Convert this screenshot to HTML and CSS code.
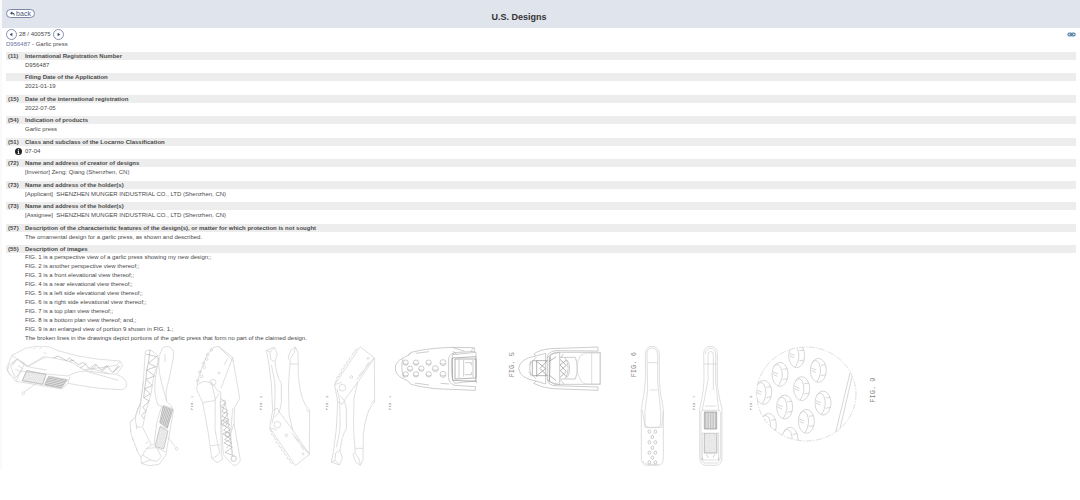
FILE: index.html
```html
<!DOCTYPE html>
<html lang="en">
<head>
<meta charset="utf-8">
<title>U.S. Designs</title>
<link rel="stylesheet" href="styles.css">
</head>
<body>
<header class="topbar">
  <button class="back" type="button"><svg class="back-icon" viewBox="0 0 16 16" aria-hidden="true"><path d="M7 1v4c5 0 8 3 8 9h-3c0-4-2-5-5-5v4L0 7z"/></svg>back</button>
  <h1 class="title">U.S. Designs</h1>
</header>
<main class="page">
  <div class="toolbar">
    <nav class="pager" aria-label="Records">
      <button class="round" type="button" aria-label="Previous"><svg viewBox="0 0 10 10"><path d="M6 3v4L3 5z"/></svg></button>
      <span>28 / 400575</span>
      <button class="round" type="button" aria-label="Next"><svg viewBox="0 0 10 10"><path d="M4 3v4L7 5z"/></svg></button>
    </nav>
    <a class="permalink" href="#" aria-label="Permanent link"><svg viewBox="0 0 24 14"><g fill="none" stroke="#5b87aa" stroke-width="3.500"><rect x="2" y="3" width="11" height="8" rx="4"/><rect x="11" y="3" width="11" height="8" rx="4"/><path d="M7 7h10"/></g></svg></a>
  </div>
  <p class="record"><a href="#">D956487</a> - Garlic press</p>
  <dl class="fields">
    <div class="field"><dt><span class="code">(11)</span>International Registration Number</dt><dd>D956487</dd></div>
    <div class="field"><dt><span class="code"></span>Filing Date of the Application</dt><dd>2021-01-19</dd></div>
    <div class="field"><dt><span class="code">(15)</span>Date of the international registration</dt><dd>2022-07-05</dd></div>
    <div class="field"><dt><span class="code">(54)</span>Indication of products</dt><dd>Garlic press</dd></div>
    <div class="field"><dt><span class="code">(51)</span>Class and subclass of the Locarno Classification</dt><dd class="with-info"><svg class="info" viewBox="0 0 12 12" role="img" aria-label="Information"><circle cx="6" cy="6" r="6" fill="#222"/><path d="M6 2v2M6 5v5M4.500 5.500H6M4.500 9.500h3" stroke="#fff" stroke-width="1.500"/></svg>07-04</dd></div>
    <div class="field"><dt><span class="code">(72)</span>Name and address of creator of designs</dt><dd>[Inventor] Zeng; Qiang (Shenzhen, CN)</dd></div>
    <div class="field"><dt><span class="code">(73)</span>Name and address of the holder(s)</dt><dd>[Applicant]&nbsp; SHENZHEN MUNGER INDUSTRIAL CO., LTD (Shenzhen, CN)</dd></div>
    <div class="field"><dt><span class="code">(73)</span>Name and address of the holder(s)</dt><dd>[Assignee]&nbsp; SHENZHEN MUNGER INDUSTRIAL CO., LTD (Shenzhen, CN)</dd></div>
    <div class="field"><dt><span class="code">(57)</span>Description of the characteristic features of the design(s), or matter for which protection is not sought</dt><dd>The ornamental design for a garlic press, as shown and described.</dd></div>
    <div class="field images"><dt><span class="code">(55)</span>Description of images</dt>
      <dd>FIG. 1 is a perspective view of a garlic press showing my new design;;</dd>
      <dd>FIG. 2 is another perspective view thereof;;</dd>
      <dd>FIG. 3 is a front elevational view thereof;;</dd>
      <dd>FIG. 4 is a rear elevational view thereof;;</dd>
      <dd>FIG. 5 is a left side elevational view thereof;;</dd>
      <dd>FIG. 6 is a right side elevational view thereof;;</dd>
      <dd>FIG. 7 is a top plan view thereof;;</dd>
      <dd>FIG. 8 is a bottom plan view thereof; and,;</dd>
      <dd>FIG. 9 is an enlarged view of portion 9 shown in FIG. 1.;</dd>
      <dd>The broken lines in the drawings depict portions of the garlic press that form no part of the claimed design.</dd>
    </div>
  </dl>
  <div class="figures">
    <svg class="figure" width="122" height="124" viewBox="18 18 366 372">
      <defs>
        <pattern id="mesh" width="7" height="7" patternUnits="userSpaceOnUse" patternTransform="rotate(12)"><circle cx="3.500" cy="3.500" r="2.500"/></pattern>
        <pattern id="slats" width="8" height="5" patternUnits="userSpaceOnUse" patternTransform="rotate(12)"><path d="M0 2h8" stroke="#777" stroke-width="2"/></pattern>
        <pattern id="slats-up" width="8" height="5" patternUnits="userSpaceOnUse" patternTransform="rotate(108)"><path d="M0 2h8" stroke="#777" stroke-width="2"/></pattern>
        <pattern id="bars" width="5" height="8" patternUnits="userSpaceOnUse"><path d="M2 0v8" stroke="#888" stroke-width="2"/></pattern>
      </defs>
      <path d="M20 84 36 46 76 25Q122 14 152 22L174 32Q230 50 290 57L360 63 368 77 350 103Q280 98 254 90L208 64 160 54 130 50 82 80 66 68 52 57 28 74 22 92 48 125 62 126 185 147 204 130Q270 142 310 146L365 149Q381 144 380 131 376 112 350 104M36 46 80 78M52 57 32 81 46 115 63 92 82 96 204 108M64 68 92 82 140 90M52 57 74 70 63 92 48 125M82 80 135 52M204 108Q245 86 270 97L355 121M204 130 210 110M250 90 350 76 360 64M20 84 30 106"/>
      <path class="dark" d="M160 54 174 48 200 62 208 54 235 74 250 67 270 86 286 72 303 90 320 77 337 97 361 78M208 64 223 60M240 85 260 70M274 91 290 74M305 94 325 77M340 98 355 76"/>
      <path d="M80 92 138 103 128 133 67 122ZM146 108 204 119 184 145 134 135Z"/>
      <path class="dark" d="M80 92 138 103 128 133 67 122Z" fill="url(#mesh)"/>
      <path class="dark" d="M146 110 200 120 184 143 134 134Z" fill="url(#slats)"/>
      <path d="M105 133 72 156"/><circle cx="70" cy="160" r="4"/>
      <path d="M34 76 49 60M46 88 67 96M54 77 70 87M100 27l6-2M118 25l6-2M131 38l8 3M260 83l70 18"/>
    </svg>
    <svg class="figure" width="67" height="124" viewBox="384 18 201 372">
      <path d="M436 34 450 29 472 45 475 65 462 105 453 160 435 225 428 262 454 315 440 325 423 352 424 370 448 377 477 373 497 347 520 214 514 198 500 184Q494 160 507 118L520 55 521 34Q509 12 488 23L477 50 466 116Q460 160 474 195L485 198 470 250 462 314 454 315M436 34 430 125 421 190 404 234 390 248 393 282 415 340 424 352M421 190Q399 230 410 260L425 262M430 125 418 224M478 54Q472 75 485 130L500 184M489 195 520 207 501 266 480 257M440 325 470 323 484 350 470 364 452 360 427 344M470 323 496 336M424 370 452 360M390 248 400 236"/>
      <path class="dark" d="M438 42 470 50 445 70 468 80 440 90 464 108 438 118 457 137 434 146 451 162 431 173 448 183 428 202 438 212 424 227 433 237M450 29 445 70 440 90 438 118 434 146 431 173"/>
      <path class="dark" d="M489 198 517 209 502 264 479 248Z" fill="url(#slats-up)"/>
      <path class="dark" d="M480 260 504 273 491 327 465 319Z" fill="url(#mesh)"/>
      <path d="M503 291 526 320M391 268l2 7M397 294l2 7M408 325l3 6M436 310l8-4M410 256v12M495 42v24"/><circle cx="530" cy="326" r="4"/>
      <text class="label small" transform="translate(580 210) rotate(-90)">FIG. 1</text>
    </svg>
    <svg class="figure" width="69" height="124" viewBox="30 18 207 372">
      <path d="M37 128 48 90 65 47 83 23 100 19 143 52 145 65 164 176 149 202 147 250 166 360Q160 377 144 376L115 344 106 185 108 157 99 153 80 128 57 124 37 134ZM37 134 35 149 53 188 70 280 80 355 96 368 113 358 109 342 106 185M53 188 88 182 103 160M80 128 91 178 90 270 104 338 95 348 82 354M78 317 104 314M143 52 108 145M143 205 137 280 142 345M106 185 120 180 132 260 142 345M100 19 145 63M117 75l12-20M147 250 137 280"/>
      <circle cx="84" cy="127" r="9"/><circle cx="102" cy="99" r="3"/>
      <path class="dark" d="M107 174 121 188 108 200 128 211 110 228 132 239 112 253 136 269 114 282 138 297 117 309 142 322 120 337 148 348M121 188 111 216 129 220 113 243 134 254 116 270 137 283 119 298 140 309 123 325"/>
      <circle class="dark" cx="118" cy="248" r="9"/><circle class="dark" cx="128" cy="284" r="7"/><circle class="dark" cx="146" cy="356" r="8"/>
      <circle cx="79" cy="30" r="4"/><circle cx="68" cy="44" r="4"/><circle cx="65" cy="57" r="4"/><circle cx="56" cy="70" r="4"/><circle cx="58" cy="82" r="4"/><circle cx="45" cy="96" r="4"/><circle cx="50" cy="109" r="4"/><circle cx="38" cy="122" r="4"/>
      <text class="label small" transform="translate(232 210) rotate(-90)">FIG. 2</text>
    </svg>
    <svg class="figure" width="65" height="124" viewBox="12 18 195 372">
      <g id="lever">
        <path d="M19 31 43 22 52 42 45 65Q50 110 64 130L64 190 58 216 98 270 148 343 106 377 29 263 32 246 38 212 34 130 25 60ZM19 31 30 36 43 22M30 36 32 58 45 66M34 75Q48 130 45 165L44 215 36 250M38 212 52 204 58 216M92 31 106 21 114 38 115 112Q123 190 149 211L148 343M92 31 84 54 91 63Q84 130 86 170L87 222 98 270M106 21 102 40 90 58M91 72H114M58 216 44 231M29 263 50 270M148 343 101 289M132 331 121 316M138 208 148 217M118 305 95 278"/>
        <circle cx="52" cy="254" r="10"/><circle cx="79" cy="286" r="4"/><circle cx="129" cy="342" r="3"/>
        <path d="M31 266q-5 8 6 9M36 279q-5 8 7 9M44 290q-5 8 7 9M50 302q-5 8 7 9M58 314q-5 8 7 9M66 325q-5 8 7 9M74 337q-5 8 7 9M83 350q-5 8 7 9M91 361q-5 8 7 9"/>
      </g>
      <text class="label small" transform="translate(203 210) rotate(-90)">FIG. 3</text>
    </svg>
    <svg class="figure" width="64" height="124" viewBox="207 18 192 372">
      <use href="#lever" transform="translate(195 397) scale(1 -1)"/>
      <text class="label small" transform="translate(394 210) rotate(-90)">FIG. 4</text>
    </svg>
    <svg class="figure" width="123" height="124" viewBox="24 18 369 372">
      <g class="dark">
        <path d="M79 37Q130 24 202 22L268 23 270 34 207 38Q190 44 191 60V112Q191 130 209 136L271 140V151L150 146Q105 141 78 133L69 123 54 116Q31 105 31 84 31 65 54 54L69 46ZM54 56Q46 83 56 113M202 22 239 34M207 38Q198 50 199 85T209 130L273 122 275 130M79 37Q72 44 69 46M92 40l40-5M90 129l42 6M167 130l25 2"/>
        <path class="bold" d="M202 54 273 50V124L203 121ZM210 57V117L273 114V57Z"/>
        <path d="M202 44 273 37V50M222 59v55M264 60v52M241 68h18v8M240 104h20v-8M236 60v50M216 45l-12-12M258 34l7-10"/>
        <g><circle cx="62" cy="68" r="8"/><circle cx="93" cy="68" r="8"/><circle cx="131" cy="68" r="8"/><circle cx="174" cy="68" r="9"/><circle cx="75" cy="86" r="8"/><circle cx="109" cy="86" r="8"/><circle cx="151" cy="86" r="9"/><circle cx="62" cy="103" r="8"/><circle cx="93" cy="103" r="8"/><circle cx="131" cy="103" r="8"/><circle cx="174" cy="103" r="9"/></g>
        <path d="M54 69q8 7 15 2M85 69q8 7 15 2M123 69q8 7 15 2M166 69q8 7 15 2M67 87q8 7 15 2M101 87q8 7 15 2M143 87q8 7 15 2M54 104q8 7 15 2M85 104q8 7 15 2M123 104q8 7 15 2M166 104q8 7 15 2"/>
      </g>
      <text class="label large" transform="translate(386 112) rotate(-90)">FIG. 5</text>
    </svg>
    <svg class="figure" width="124" height="124" viewBox="48 18 372 372">
      <g class="dark">
        <path d="M102 42Q115 30 152 26L294 21V33L165 32Q145 36 142 50V120Q147 137 165 137L294 141V151L157 146Q123 142 101 130M102 42 108 48 137 40M101 130 108 123 137 132M108 48Q60 55 56 85 60 116 108 123M165 37H301V133H165M137 40V132M152 43 179 37V134L148 126ZM180 52H226Q238 84 226 117H180M195 53Q214 85 195 117M190 42l-8 12M182 120l10 12M142 52 165 37M142 119 165 134"/>
        <path class="bold" d="M97 62V107M110 61V110M97 62H142M97 107H142M110 64 137 86 110 107M142 62 120 85 142 108M147 65 168 50M147 105 168 122M180 58 199 76 181 92 199 110M180 112 199 94 180 75 199 60M148 50V124"/>
        <path d="M92 63Q85 85 93 109M88 74l20-22M86 96l22 20M202 60q14 25 0 52"/>
      </g>
      <path d="M240 49Q220 84 243 122 250 132 260 132H300V39H262Q248 39 240 49M275 37v96"/>
      <text class="label large" transform="translate(408 112) rotate(-90)">FIG. 6</text>
    </svg>
    <svg class="figure" width="57" height="124" viewBox="45 18 171 372">
      <path d="M61 43Q62 19 81 19T103 43V118Q104 157 115 208V350Q116 375 100 376H65Q48 375 49 350V208Q60 150 62 110ZM66 46Q65 24 81 24T98 46V125L107 215V250Q105 263 94 263H70Q60 261 60 248V212L68 150ZM52 210 60 262H110L115 215M68 68H97M54 364Q60 373 70 373H101M75 150H98"/>
      <g class="dark"><ellipse cx="73" cy="275" rx="4" ry="5"/><ellipse cx="91" cy="275" rx="4" ry="5"/><ellipse cx="82" cy="291" rx="4" ry="5"/><ellipse cx="73" cy="307" rx="4" ry="5"/><ellipse cx="91" cy="307" rx="4" ry="5"/><ellipse cx="82" cy="323" rx="4" ry="5"/><ellipse cx="73" cy="338" rx="4" ry="5"/><ellipse cx="91" cy="338" rx="4" ry="5"/><ellipse cx="82" cy="353" rx="4" ry="5"/><ellipse cx="73" cy="367" rx="4" ry="5"/><ellipse cx="91" cy="367" rx="4" ry="5"/></g>
      <text class="label small" transform="translate(210 210) rotate(-90)">FIG. 7</text>
    </svg>
    <svg class="figure" width="58" height="124" viewBox="216 18 174 372">
      <path d="M236 40Q238 19 257 19T277 40L277 123Q277 152 291 207V352Q291 376 272 376H240Q224 373 224 352V207Q238 147 237 110ZM241 42Q244 25 257 25T272 42V125L281 210M249 45Q249 34 257 34T265 45V150M249 45V120L232 210M237 72H276M240 198H274M231 211H283L287 218V356L278 369H237L228 357V218Z"/>
      <path d="M232 360H281V279H276V341H238V279H232Z"/>
      <path class="bold" d="M238 216H275V267H238Z" fill="url(#bars)"/>
      <path class="dark" d="M238 280H275V338H238Z" fill="url(#mesh)"/>
      <path class="dark" d="M232 360v-8M281 360v-8M245 345l5 8M269 345l-5 8"/>
      <text class="label small" transform="translate(382 210) rotate(-90)">FIG. 8</text>
    </svg>
    <svg class="figure" width="130" height="124" viewBox="45 18 390 372">
      <defs>
        <clipPath id="lens"><ellipse cx="199" cy="162" rx="149" ry="141"/></clipPath>
        <g id="hole"><ellipse rx="24" ry="36"/><path d="M-18-24Q-8-36 2-22 14 6-4 34M8-15 22-17M8 16 22 13M-21-7-6-1M-21 0-8 6"/></g>
      </defs>
      <ellipse cx="199" cy="162" rx="149" ry="141" stroke-dasharray="18 4 4 4"/>
      <g class="holes" clip-path="url(#lens)">
        <use href="#hole" x="170" y="47"/><use href="#hole" x="120" y="103"/><use href="#hole" x="235" y="91"/><use href="#hole" x="71" y="157"/><use href="#hole" x="185" y="146"/><use href="#hole" x="134" y="201"/><use href="#hole" x="249" y="189"/><use href="#hole" x="85" y="256"/><use href="#hole" x="199" y="244"/><use href="#hole" x="150" y="298"/><use href="#hole" x="56" y="60"/>
        <path d="M330 99 285 285M336 110 295 288"/>
      </g>
      <text class="label large" transform="translate(405 188) rotate(-90)">FIG. 9</text>
    </svg>
  </div>
</main>
</body>
</html>
```
FILE: styles.css
```css
* {
  box-sizing: border-box;
}

body {
  margin: 0;
  border-left: 2px solid #fafafa;
  background: #fff;
  color: #4a4a4a;
  font: 6px/9px "Liberation Sans", Arial, sans-serif;
}

.topbar {
  display: grid;
  grid-template-columns: 1fr auto 1fr;
  align-items: start;
  height: 28px;
  padding: 9px 48px 0 4px;
  background: #e0e4ed;
}

.back {
  display: flex;
  align-items: center;
  justify-content: center;
  justify-self: start;
  gap: 1px;
  width: 29px;
  height: 9px;
  padding: 0;
  border: 1px solid #7c86a6;
  border-radius: 5px;
  background: #fff;
  color: #4a5578;
  font: inherit;
  font-size: 7px;
  line-height: 7px;
}

.back-icon {
  width: 5px;
  height: 5px;
  fill: #3c4770;
}

.title {
  margin: 3px 0 0;
  color: #333;
  font-size: 9px;
  line-height: 11px;
}

.page {
  padding: 1px 4px 0;
}

.toolbar {
  display: flex;
  align-items: center;
  justify-content: space-between;
  height: 11px;
}

.pager {
  display: flex;
  align-items: center;
  gap: 2px;
}

.round {
  display: flex;
  width: 11px;
  height: 11px;
  padding: 0;
  border: 1px solid #8791b0;
  border-radius: 50%;
  background: #fff;
}

.round svg {
  width: 9px;
  height: 9px;
  fill: #3c4770;
}

.permalink {
  display: flex;
}

.permalink svg {
  width: 9px;
  height: 5px;
}

.record {
  margin: 0;
  line-height: 9px;
}

.record a {
  color: #6673a8;
  text-decoration: none;
}

.fields {
  margin: 3px 0 0;
}

.field {
  padding-bottom: 3px;
}

.field:nth-child(even) {
  padding-bottom: 4px;
}

dt {
  display: flex;
  margin-bottom: 1px;
  background: #ededed;
  font-weight: bold;
  line-height: 8px;
}

.code {
  width: 19px;
  padding-left: 2px;
}

dd {
  margin: 0 0 0 19px;
}

.with-info {
  display: flex;
  align-items: center;
  gap: 3px;
  margin-left: 9px;
}

.info {
  width: 7px;
  height: 7px;
}

.images dt {
  margin-bottom: 0;
}

.field.images {
  padding-bottom: 3px;
}

.figures {
  display: flex;
  flex-wrap: wrap;
}

.figure {
  flex: none;
  fill: none;
  stroke: #cfcfcf;
  stroke-width: 2;
  stroke-linejoin: round;
}

.figure .dark {
  stroke: #b4b4b4;
}

.figure .bold {
  stroke: #909090;
}

.figure .holes {
  stroke: #c2c2c2;
}

.label {
  fill: #888;
  stroke: none;
  font-family: "Liberation Mono", monospace;
}

.label.small {
  fill: #999;
  font-size: 12px;
}

.label.large {
  font-size: 21px;
}
```
